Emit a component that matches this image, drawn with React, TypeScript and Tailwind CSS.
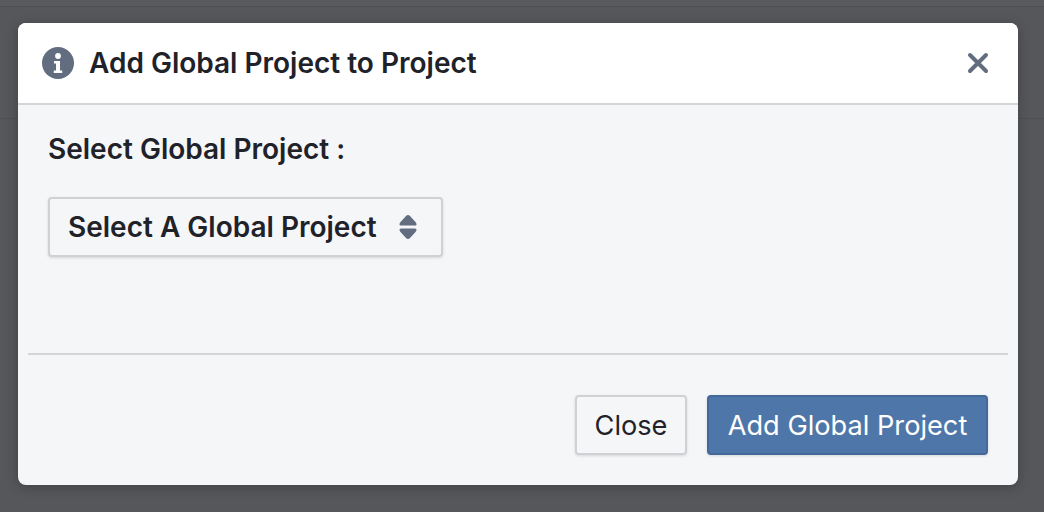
import React from 'react';

const SLATE = '#626d80';

const App: React.FC = () => {
  return (
    <div className="relative h-[512px] w-[1044px] overflow-hidden bg-[#55575b]" style={{ fontFamily: 'Inter, sans-serif' }}>
      {/* page behind the overlay */}
      <div className="absolute inset-x-0 top-0 h-[7px] border-b border-[#4f5054] bg-[#595a5e]" />
      <div className="absolute inset-x-0 top-[118px] h-px bg-[#4f5054]" />

      <div className="relative flex h-full items-start pl-[18px] pt-[23px]">
        <div className="flex h-[462px] w-[1000px] flex-col overflow-hidden rounded-[8px] bg-[#f5f6f8] shadow-[0_2px_12px_rgba(0,0,0,0.25)]">
          {/* header */}
          <div className="flex h-[82px] items-center justify-between border-b-2 border-[#d3d5d9] bg-white pl-[24px] pr-[29px]">
            <div className="flex items-center gap-[15px]">
              <svg width="32" height="32" viewBox="0 0 32 32">
                <circle cx="16" cy="16" r="16" fill={SLATE} />
                <circle cx="16" cy="9" r="2.900" fill="#fff" />
                <path d="M12 14h6v9.500h2.200V26h-8.400v-2.500H14V16.500h-2z" fill="#fff" />
              </svg>
              <h1 className="text-[28px] font-semibold text-[#1f2229]">Add Global Project to Project</h1>
            </div>
            <svg width="22" height="22" viewBox="0 0 22 22">
              <path d="M3 3l16 16M19 3L3 19" stroke={SLATE} strokeWidth="4" strokeLinecap="round" />
            </svg>
          </div>

          {/* body */}
          <div className="flex flex-1 flex-col px-[30px] pt-[26px]">
            <p className="text-[28px] leading-[36px] font-semibold text-[#1f2229]">Select Global Project :</p>
            <button className="mt-[30px] flex h-[60px] w-[395px] items-center justify-between rounded-[4px] border-2 border-[#cfd1d5] bg-[#f5f6f8] pl-[18px] pr-[24px] text-[28px] font-semibold text-[#1f2229] shadow-[0_1px_3px_rgba(0,0,0,0.12)]">
              Select A Global Project
              <svg width="18" height="24" viewBox="0 0 18 24">
                <path d="M9 0Q10 0 11 1L16.500 7Q19 10.600 15.500 10.600H2.500Q-1 10.600 1.500 7L7 1Q8 0 9 0zM9 24Q10 24 11 23L16.500 17Q19 13.400 15.500 13.400H2.500Q-1 13.400 1.500 17L7 23Q8 24 9 24z" fill={SLATE} />
              </svg>
            </button>
          </div>

          {/* footer */}
          <div className="mx-[10px] flex h-[132px] items-center justify-end gap-[20px] border-t-2 border-[#d3d5d9] pr-[20px] pt-[10px]">
            <button className="h-[60px] w-[112px] rounded-[4px] border-2 border-[#cfd1d5] bg-[#f5f6f8] pt-[2px] text-[27.2px] text-[#1f2229] shadow-[0_1px_3px_rgba(0,0,0,0.12)]">
              Close
            </button>
            <button className="h-[60px] w-[281px] rounded-[4px] border-2 border-[#44689a] bg-[#4f76a9] pt-[2px] text-[27.2px] text-white shadow-[0_1px_3px_rgba(0,0,0,0.12)]">
              Add Global Project
            </button>
          </div>
        </div>
      </div>
    </div>
  );
};

export default App;
